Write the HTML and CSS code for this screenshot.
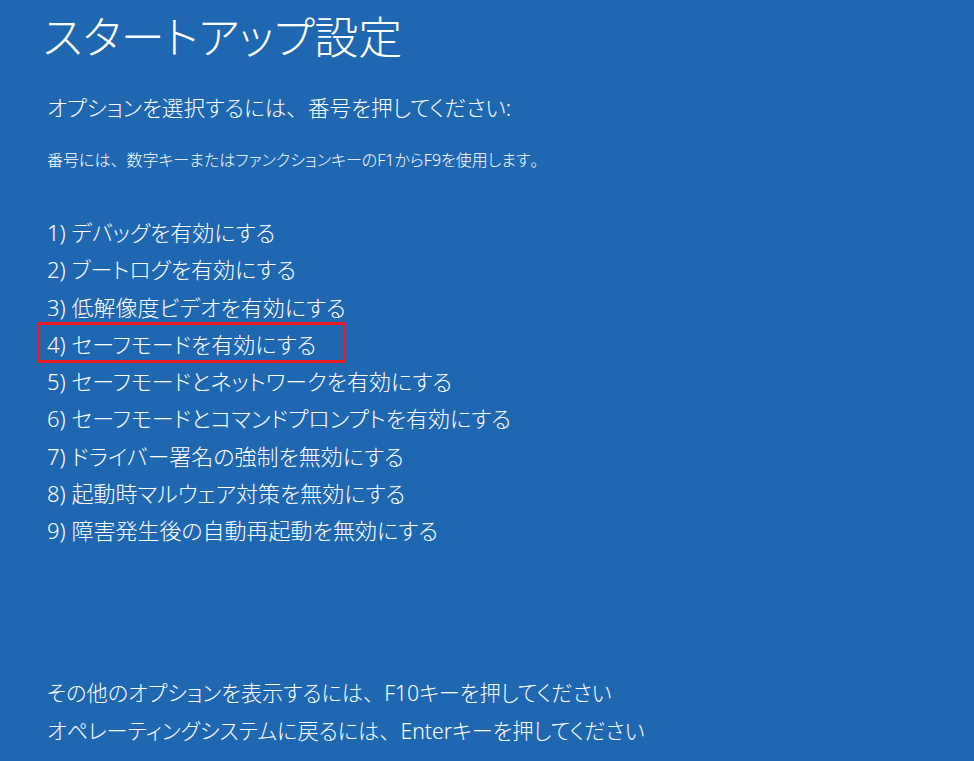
FILE: index.html
```html
<!DOCTYPE html>
<html lang="ja">
<head>
<meta charset="utf-8">
<title>スタートアップ設定</title>
<link rel="stylesheet" href="styles.css">
</head>
<body>
<main class="screen">
  <h1 class="title">スタートアップ設定</h1>
  <p class="prompt">オプションを選択するには<span class="fw">、</span>番号を押してください:</p>
  <p class="note">番号には<span class="fw">、</span>数字キーまたはファンクションキーのF1からF9を使用します<span class="fw">。</span></p>
  <ol class="options">
    <li>1) デバッグを有効にする</li>
    <li>2) ブートログを有効にする</li>
    <li>3) 低解像度ビデオを有効にする</li>
    <li class="selected">4) セーフモードを有効にする</li>
    <li>5) セーフモードとネットワークを有効にする</li>
    <li>6) セーフモードとコマンドプロンプトを有効にする</li>
    <li>7) ドライバー署名の強制を無効にする</li>
    <li>8) 起動時マルウェア対策を無効にする</li>
    <li>9) 障害発生後の自動再起動を無効にする</li>
  </ol>
  <div class="footer">
    <p class="footer-line">その他のオプションを表示するには<span class="fw">、</span>F10キーを押してください</p>
    <p class="footer-line">オペレーティングシステムに戻るには<span class="fw">、</span>Enterキーを押してください</p>
  </div>
</main>
</body>
</html>
```
FILE: styles.css
```css
html, body {
  margin: 0;
  padding: 0;
  height: 100%;
}
body {
  background: #2067b2;
  color: #ffffff;
  font-family: "Noto Sans", "Noto Sans CJK JP", sans-serif;
  font-weight: 300;
  font-feature-settings: "palt";
}
.fw {
  font-feature-settings: normal;
}
.screen {
  box-sizing: border-box;
  height: 100vh;
  display: flex;
  flex-direction: column;
  padding: 13px 0 11px 47px;
}
.title {
  margin: 0 0 0 -4px;
  font-size: 44px;
  line-height: 48px;
  font-weight: 300;
}
.prompt {
  margin: 32px 0 0;
  font-size: 21.6px;
  line-height: 30px;
}
.note {
  margin: 26px 0 0;
  font-size: 16px;
  line-height: 22px;
}
.options {
  list-style: none;
  margin: 43px 0 0;
  padding: 0;
  font-size: 22px;
  line-height: 37.25px;
}
.options li {
  position: relative;
}
.selected::after {
  content: "";
  position: absolute;
  left: -10px;
  top: -4px;
  width: 303px;
  height: 35px;
  border: 3px solid #f01820;
  border-radius: 2px;
}
.footer {
  margin-top: auto;
}
.footer-line {
  margin: 0;
  font-size: 21.2px;
  line-height: 38px;
}
```
